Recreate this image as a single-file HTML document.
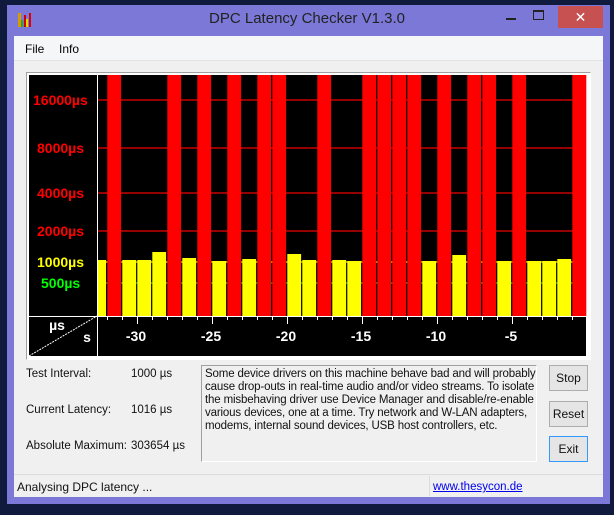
<!DOCTYPE html>
<html><head><meta charset="utf-8"><style>
*{margin:0;padding:0;box-sizing:border-box}
body{width:614px;height:515px;overflow:hidden;background:#101a3c;font-family:"Liberation Sans",sans-serif;position:relative}
.win{position:absolute;left:7px;top:5px;width:603px;height:499px;background:#7b78d8}
.title{position:absolute;left:0;top:0;width:614px;text-align:center;top:10px;font-size:15px;color:#222}
.client{position:absolute;left:14px;top:36px;width:589px;height:461px;background:#f0f0f0}
.menu{position:absolute;left:14px;top:36px;width:589px;height:25px;background:#f5f6f7;border-bottom:1px solid #e3e3e3;font-size:12px}
.abs{position:absolute}
.lbl{font-size:11.5px;color:#111}
.btn{position:absolute;left:549px;width:39px;height:26px;border:1px solid #adadad;background:#e5e5e5;font-size:12px;text-align:center;line-height:24px;color:#111}
</style></head><body>
<div class="win"></div>
<div class="title">DPC Latency Checker V1.3.0</div>
<svg class="abs" style="left:16px;top:12px" width="16" height="16"><rect x="2" y="1" width="3" height="14" fill="#d89a00"/><rect x="5" y="8" width="2" height="7" fill="#2a2"/><rect x="8" y="3" width="2" height="12" fill="#c00"/><rect x="10" y="7" width="2" height="8" fill="#dd0"/><rect x="13" y="1" width="2" height="14" fill="#d00"/></svg>
<div class="abs" style="left:506px;top:18px;width:10px;height:2px;background:#222"></div>
<div class="abs" style="left:533px;top:10px;width:11px;height:10px;border:1px solid #222;border-top-width:2px"></div>
<div class="abs" style="left:558px;top:6px;width:45px;height:22px;background:#c75050;color:#fff;text-align:center;font-size:14px;line-height:22px">✕</div>
<div class="client"></div>
<div class="menu"><span class="abs" style="left:11px;top:6px">File</span><span class="abs" style="left:45px;top:6px">Info</span></div>
<div class="abs" style="left:26px;top:72px;width:565px;height:288px;border:1px solid #a0a0a0;border-right-color:#fff;border-bottom-color:#fff;background:#fff"></div>
<svg class="abs" style="left:0;top:0" width="614" height="515">
<rect x="29" y="75" width="557" height="281" fill="#000"/>
<g stroke-width="1.3">
<line x1="97" y1="100" x2="586" y2="100" stroke="#e00"/>
<line x1="97" y1="148" x2="586" y2="148" stroke="#e00"/>
<line x1="97" y1="193" x2="586" y2="193" stroke="#e00"/>
<line x1="97" y1="231" x2="586" y2="231" stroke="#e00"/>
<line x1="97" y1="262" x2="586" y2="262" stroke="#ee0"/>
<line x1="97" y1="283" x2="586" y2="283" stroke="#2c2"/>
</g>
<g id="b">
<rect x="98" y="260" width="8" height="56" fill="#ff0"/>
</g>
<line x1="97.5" y1="75" x2="97.5" y2="356" stroke="#fff"/>
<line x1="29" y1="316.5" x2="586" y2="316.5" stroke="#fff"/>
<line x1="29" y1="356" x2="97" y2="316" stroke="#fff" stroke-dasharray="2,1"/>
<g id="ticks" stroke="#fff"></g>
<g font-weight="bold" font-size="14" font-family="Liberation Sans">
<text x="33" y="105" fill="#f00">16000µs</text>
<text x="37" y="153" fill="#f00">8000µs</text>
<text x="37" y="198" fill="#f00">4000µs</text>
<text x="37" y="236" fill="#f00">2000µs</text>
<text x="37" y="267" fill="#ff0">1000µs</text>
<text x="41" y="288" fill="#0f0">500µs</text>
<g fill="#fff" text-anchor="middle">
<text x="57" y="330">µs</text><text x="87" y="342">s</text>
<text x="136" y="341">-30</text><text x="211" y="341">-25</text><text x="286" y="341">-20</text><text x="361" y="341">-15</text><text x="436" y="341">-10</text><text x="511" y="341">-5</text>
</g></g>
</svg>
<script>
var s=[["r"],["y",260],["y",260],["y",252],["r"],["y",258],["r"],["y",261],["r"],["y",259],["r"],["r"],["y",254],["y",260],["r"],["y",260],["y",261],["r"],["r"],["r"],["r"],["y",261],["r"],["y",255],["r"],["r"],["y",261],["r"],["y",261],["y",261],["y",259],["r"]];
var g=document.getElementById("b"),ns="http://www.w3.org/2000/svg",t=document.getElementById("ticks");
for(var i=0;i<s.length;i++){var x=106.7+15*i,r=document.createElementNS(ns,"rect");r.setAttribute("x",x+0.6);r.setAttribute("width",i==31?14:13.8);
if(s[i][0]=="r"){r.setAttribute("y",75);r.setAttribute("height",241);r.setAttribute("fill","#f00")}else{r.setAttribute("y",s[i][1]);r.setAttribute("height",316-s[i][1]);r.setAttribute("fill","#ff0")}g.appendChild(r);}
for(var i=0;i<32;i++){var x=Math.round(106.7+15*i)+0.5,l=document.createElementNS(ns,"line");l.setAttribute("x1",x);l.setAttribute("x2",x);l.setAttribute("y1",316);l.setAttribute("y2",(i%5==2)?324:320);t.appendChild(l);}
</script>
<div class="abs lbl" style="left:26px;top:368px">Test Interval:</div><div class="abs lbl" style="left:131px;top:368px">1000 µs</div>
<div class="abs lbl" style="left:26px;top:404px">Current Latency:</div><div class="abs lbl" style="left:131px;top:404px">1016 µs</div>
<div class="abs lbl" style="left:26px;top:440px">Absolute Maximum:</div><div class="abs lbl" style="left:131px;top:440px">303654 µs</div>
<div class="abs lbl" style="left:201px;top:365px;width:336px;height:97px;border:1px solid #a0a0a0;border-right-color:#fff;border-bottom-color:#fff;padding:2px 3px;line-height:13px;font-size:11.5px;white-space:nowrap;letter-spacing:-0.15px;overflow:hidden">Some device drivers on this machine behave bad and will probably<br>cause drop-outs in real-time audio and/or video streams. To isolate<br>the misbehaving driver use Device Manager and disable/re-enable<br>various devices, one at a time. Try network and W-LAN adapters,<br>modems, internal sound devices, USB host controllers, etc.</div>
<div class="btn" style="top:365px">Stop</div>
<div class="btn" style="top:401px">Reset</div>
<div class="btn" style="top:436px;border-color:#3399ff">Exit</div>
<div class="abs" style="left:14px;top:474px;width:589px;height:1px;background:#dcdcdc"></div>
<div class="abs" style="left:429px;top:476px;width:1px;height:20px;background:#dcdcdc"></div>
<div class="abs" style="left:17px;top:480px;font-size:12px;color:#111">Analysing DPC latency ...</div>
<div class="abs" style="left:433px;top:481px;font-size:11.5px;color:#00e;text-decoration:underline">www.thesycon.de</div>
</body></html>
